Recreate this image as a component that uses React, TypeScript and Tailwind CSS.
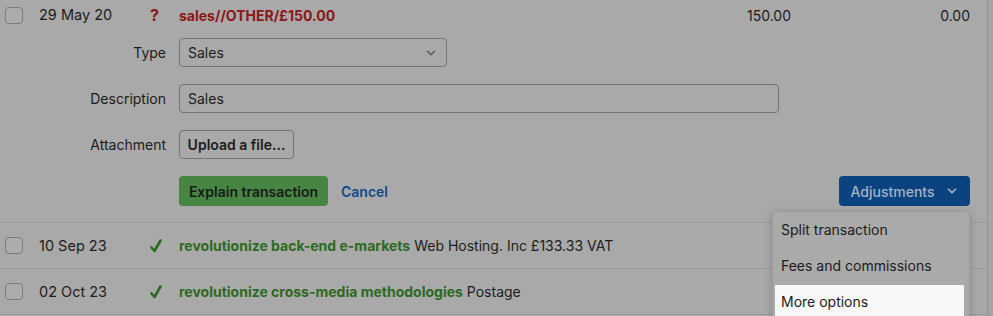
import { ChevronDown } from 'lucide-react';

const rows = [
  { date: '10 Sep 23', title: 'revolutionize back-end e-markets', note: 'Web Hosting. Inc £133.33 VAT' },
  { date: '02 Oct 23', title: 'revolutionize cross-media methodologies', note: 'Postage' },
];

function Checkbox() {
  return <span className="block w-[18px] h-[17px] rounded-[4px] border border-[#7a7d80] bg-[#acacac]" />;
}

function Tick() {
  return (
    <svg width="12" height="14" viewBox="0 0 12 14" fill="none" className="text-[#2d6a21]">
      <path d="M1.5 8.5 L4.5 12 L10.5 1.5" stroke="currentColor" strokeWidth="2.6" strokeLinecap="round" strokeLinejoin="round" />
    </svg>
  );
}

function Field({ label, children }: { label: string; children: React.ReactNode }) {
  return (
    <div className="flex items-center">
      <span className="w-[166px] text-right text-[14px] text-[#1c1c1c]">{label}</span>
      <div className="ml-[13px]">{children}</div>
    </div>
  );
}

export default function App() {
  return (
    <div className="w-[993px] h-[316px] bg-[#a9a9a9] flex overflow-hidden font-['Inter',sans-serif] text-[#1c1c1c]">
      <div className="w-[988px] border-r border-[#8e9398] relative">
        {/* expanded row */}
        <div className="h-[30px] flex items-center pl-[5px]">
          <Checkbox />
          <span className="ml-[16px] w-[111px] text-[14.5px]">29 May 20</span>
          <span className="w-[29px] text-[16px] font-bold text-[#8a1717]">?</span>
          <span className="flex-1 text-[14px] font-bold text-[#8a1717]">sales//OTHER/£150.00</span>
          <span className="w-[100px] text-right text-[14px]">150.00</span>
          <span className="w-[196px] pr-[17px] text-right text-[14px]">0.00</span>
        </div>

        <div className="pt-[8px] flex flex-col gap-[17px]">
          <Field label="Type">
            <div className="w-[268px] h-[29px] rounded-[4px] border border-[#70757a] flex items-center justify-between pl-[8px] pr-[8px] text-[14px]">
              <span>Sales</span>
              <ChevronDown size={14} strokeWidth={2.5} className="text-[#55595d]" />
            </div>
          </Field>
          <Field label="Description">
            <div className="w-[600px] h-[29px] rounded-[4px] border border-[#70757a] flex items-center pl-[8px] text-[14px]">
              Sales
            </div>
          </Field>
          <Field label="Attachment">
            <div className="w-[115px] h-[29px] rounded-[4px] border border-[#70757a] flex items-center justify-center text-[14px] font-semibold">
              Upload a file...
            </div>
          </Field>
        </div>

        <div className="mt-[17px] h-[30px] flex items-center pl-[179px] pr-[17px]">
          <div className="h-[30px] w-[149px] rounded-[4px] bg-[#478642] flex items-center justify-center text-[14px] font-semibold text-[#1a1a1a]">
            Explain transaction
          </div>
          <span className="ml-[13px] text-[14px] font-semibold text-[#0f4c8a]">Cancel</span>
          <div className="ml-auto h-[30px] w-[131px] rounded-[4px] bg-[#0b4380] flex items-center justify-center gap-[10px] text-[14px] font-medium text-[#a3b3c6]">
            Adjustments
            <ChevronDown size={14} strokeWidth={3} />
          </div>
        </div>

        <div className="mt-[16px] border-t border-[#979a9d]">
          {rows.map((r) => (
            <div key={r.date} className="h-[46px] flex items-center pl-[5px] border-b border-[#979a9d]">
              <Checkbox />
              <span className="ml-[16px] w-[111px] text-[14.5px]">{r.date}</span>
              <span className="w-[29px] pl-[-1px]">
                <Tick />
              </span>
              <span className="text-[14px]">
                <span className="font-bold text-[#2d6a21]">{r.title}</span> {r.note}
              </span>
            </div>
          ))}
        </div>

        {/* dropdown menu */}
        <div className="absolute left-[772px] top-[211px] w-[198px] rounded-[4px] border border-[#9a9da0] bg-[#aaaaaa] shadow-[0_2px_8px_rgba(0,0,0,0.2)] pt-[1px] pl-[2px] pr-[5px] flex flex-col gap-[4px]">
          <div className="h-[32px] flex items-center pl-[6px] text-[14px]">Split transaction</div>
          <div className="h-[32px] flex items-center pl-[6px] text-[14px]">Fees and commissions</div>
          <div className="h-[32px] flex items-center pl-[6px] text-[14px] bg-[#f7f7f7]">More options</div>
        </div>
      </div>
      <div className="flex-1 bg-[#a0a5aa]" />
    </div>
  );
}
